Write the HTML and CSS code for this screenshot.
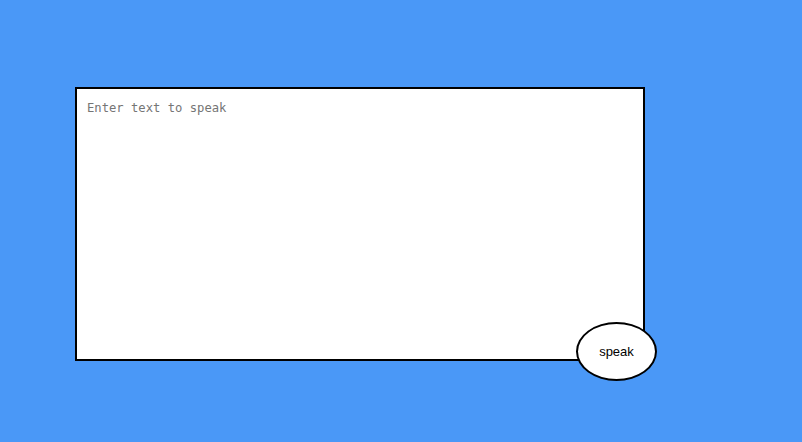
FILE: index.html
```html
<!DOCTYPE html>
<html>
<head>
<meta charset="utf-8">
<link rel="stylesheet" href="styles.css">
</head>
<body>
<div class="page">
  <div class="speaker">
    <textarea class="input" placeholder="Enter text to speak"></textarea>
    <button class="speak-btn">speak</button>
  </div>
</div>
</body>
</html>
```
FILE: styles.css
```css
html, body {
  margin: 0;
  height: 100%;
}
body {
  background: #4a98f7;
}
.page {
  padding: 87px 0 0 75px;
}
.speaker {
  position: relative;
  width: 570px;
  height: 274px;
}
.input {
  display: block;
  box-sizing: border-box;
  width: 570px;
  height: 274px;
  margin: 0;
  border: 2px solid #000;
  background: #fff;
  padding: 12px 10px;
  font-family: "DejaVu Sans Mono", "Liberation Mono", monospace;
  font-size: 12.2px;
  resize: none;
  outline: none;
}
.input::placeholder {
  color: #757575;
}
.speak-btn {
  position: absolute;
  left: 501px;
  top: 235px;
  width: 81px;
  height: 59px;
  box-sizing: border-box;
  border: 2px solid #000;
  border-radius: 50%;
  background: #fff;
  font-family: "Liberation Sans", Arial, sans-serif;
  font-size: 13px;
  color: #000;
  padding: 0;
}
```
